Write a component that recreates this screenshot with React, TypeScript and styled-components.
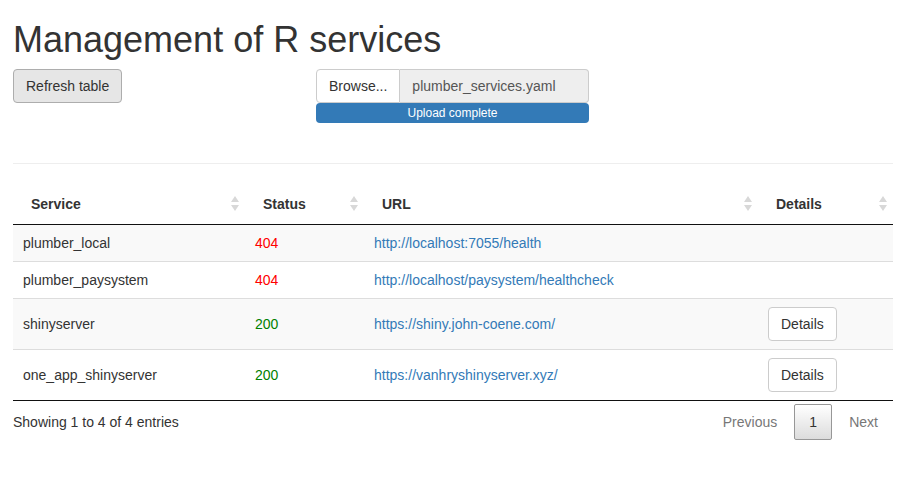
import styled, { createGlobalStyle } from "styled-components";

const GlobalStyle = createGlobalStyle`
  body {
    margin: 0;
    background: #fff;
    font-family: "Liberation Sans", Arial, sans-serif;
    font-size: 14px;
    line-height: 1.42857;
    color: #333;
  }
`;

type Row = {
  service: string;
  status: number;
  url: string;
  details: boolean;
};

const rows: Row[] = [
  { service: "plumber_local", status: 404, url: "http://localhost:7055/health", details: false },
  { service: "plumber_paysystem", status: 404, url: "http://localhost/paysystem/healthcheck", details: false },
  { service: "shinyserver", status: 200, url: "https://shiny.john-coene.com/", details: true },
  { service: "one_app_shinyserver", status: 200, url: "https://vanhryshinyserver.xyz/", details: true },
];

const columns = [
  { title: "Service", width: 232 },
  { title: "Status", width: 119 },
  { title: "URL", width: 394 },
  { title: "Details", width: 135 },
];

const SortIcon = () => (
  <svg width="8" height="15" viewBox="0 0 8 15">
    <path d="M4 0 L8 6 L0 6 Z" fill="#d8d8d8" />
    <path d="M0 9 L8 9 L4 15 Z" fill="#d8d8d8" />
  </svg>
);

const App = () => {
  return (
    <Page>
      <GlobalStyle />
      <Title>Management of R services</Title>
      <Controls>
        <div>
          <Button $pressed>Refresh table</Button>
        </div>
        <Upload>
          <FileGroup>
            <Browse>Browse...</Browse>
            <FileName>plumber_services.yaml</FileName>
          </FileGroup>
          <Progress>Upload complete</Progress>
        </Upload>
      </Controls>
      <Rule />
      <Table>
        <colgroup>
          {columns.map((c) => (
            <col key={c.title} style={{ width: c.width }} />
          ))}
        </colgroup>
        <thead>
          <tr>
            {columns.map((c) => (
              <Th key={c.title}>
                <HeadInner>
                  <span>{c.title}</span>
                  <SortIcon />
                </HeadInner>
              </Th>
            ))}
          </tr>
        </thead>
        <tbody>
          {rows.map((r, i) => (
            <Tr key={r.service} $odd={i % 2 === 0} $first={i === 0}>
              <Td>{r.service}</Td>
              <Td>
                <Status $ok={r.status === 200}>{r.status}</Status>
              </Td>
              <Td>
                <Link href="#">{r.url}</Link>
              </Td>
              <Td>{r.details && <Button>Details</Button>}</Td>
            </Tr>
          ))}
        </tbody>
      </Table>
      <Footer>
        <Info>Showing 1 to 4 of 4 entries</Info>
        <Pager>
          <PageButton $disabled>Previous</PageButton>
          <PageButton $current>1</PageButton>
          <PageButton $disabled>Next</PageButton>
        </Pager>
      </Footer>
    </Page>
  );
};

export default App;

const Page = styled.div`
  padding: 0 11px 0 13px;
`;

const Title = styled.h1`
  margin: 20px 0 9px;
  font-size: 36px;
  font-weight: 500;
  line-height: 1.1;
  color: #333;
`;

const Controls = styled.div`
  display: grid;
  grid-template-columns: 303px 273px;
  align-items: start;
  margin-bottom: 40px;
`;

const Button = styled.button<{ $pressed?: boolean }>`
  font-family: inherit;
  font-size: 14px;
  line-height: 20px;
  padding: 6px 12px;
  color: #333;
  background: ${(p) => (p.$pressed ? "#e6e6e6" : "#fff")};
  border: 1px solid ${(p) => (p.$pressed ? "#adadad" : "#ccc")};
  border-radius: 4px;
  cursor: pointer;
`;

const Upload = styled.div`
  display: flex;
  flex-direction: column;
`;

const FileGroup = styled.div`
  display: flex;
  height: 34px;
`;

const Browse = styled.div`
  padding: 6px 12px;
  line-height: 20px;
  background: #fff;
  border: 1px solid #ccc;
  border-radius: 4px 0 0 4px;
  color: #333;
`;

const FileName = styled.div`
  flex: 1;
  padding: 6px 12px;
  line-height: 20px;
  background: #eee;
  border: 1px solid #ccc;
  border-left: none;
  border-radius: 0 4px 4px 0;
  color: #555;
`;

const Progress = styled.div`
  height: 20px;
  line-height: 20px;
  background: #337ab7;
  border-radius: 4px;
  color: #fff;
  font-size: 12px;
  text-align: center;
`;

const Rule = styled.hr`
  margin: 0 0 20px;
  border: 0;
  border-top: 1px solid #eee;
`;

const Table = styled.table`
  width: 880px;
  table-layout: fixed;
  border-collapse: collapse;
`;

const Th = styled.th`
  padding: 10px 6px 10px 18px;
  border-bottom: 1px solid #111;
  text-align: left;
  font-weight: bold;
  line-height: 20px;
`;

const HeadInner = styled.div`
  display: flex;
  align-items: center;
  justify-content: space-between;
`;

const Tr = styled.tr<{ $odd: boolean; $first: boolean }>`
  background: ${(p) => (p.$odd ? "#f9f9f9" : "#fff")};
  border-top: ${(p) => (p.$first ? "none" : "1px solid #ddd")};
`;

const Td = styled.td`
  padding: 8px 10px;
  line-height: 20px;
  vertical-align: middle;
`;

const Status = styled.span<{ $ok: boolean }>`
  color: ${(p) => (p.$ok ? "green" : "red")};
`;

const Link = styled.a`
  color: #337ab7;
  text-decoration: none;
`;

const Footer = styled.div`
  width: 880px;
  border-top: 1px solid #111;
  display: flex;
  justify-content: space-between;
  align-items: flex-start;
`;

const Info = styled.div`
  padding-top: 11px;
  line-height: 20px;
`;

const Pager = styled.div`
  display: flex;
  padding-top: 3px;
`;

const PageButton = styled.div<{ $disabled?: boolean; $current?: boolean }>`
  min-width: 8px;
  padding: 7px 14px;
  margin-left: 2px;
  line-height: 20px;
  text-align: center;
  color: ${(p) => (p.$disabled ? "#777" : "#333")};
  border: 1px solid ${(p) => (p.$current ? "#979797" : "transparent")};
  border-radius: 2px;
  background: ${(p) =>
    p.$current ? "linear-gradient(to bottom, #fff 0%, #dcdcdc 100%)" : "transparent"};
`;
